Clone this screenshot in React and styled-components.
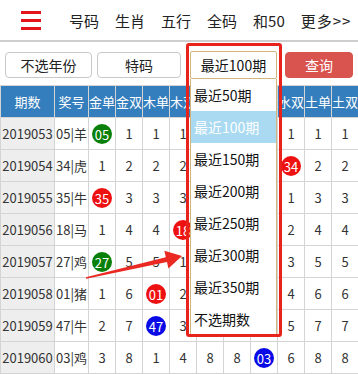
import React from 'react'
import styled, { createGlobalStyle } from 'styled-components'

const Global = createGlobalStyle`
  body {
    margin: 0;
    background: #fff;
    font-family: "Noto Sans CJK SC", "Noto Sans", sans-serif;
  }
`

const Page = styled.div`
  position: relative;
  width: 358px;
  height: 374px;
  overflow: hidden;
`

const Nav = styled.div`
  height: 40px;
  display: flex;
  align-items: center;
  border-bottom: 2px solid #cfcfcf;
`

const Burger = styled.div`
  width: 20px;
  margin: 0 28px 0 21px;
  display: flex;
  flex-direction: column;
  gap: 5px;
  span {
    display: block;
    height: 3px;
    background: #e3151a;
  }
`

const NavItems = styled.div`
  display: flex;
  gap: 16px;
  font-size: 15px;
  color: #222;
  white-space: nowrap;
`

const More = styled.span`
  letter-spacing: 1px;
`

const Filter = styled.div`
  display: flex;
  align-items: center;
  padding: 9px 0 0 5px;
  height: 28px;
`

const Btn = styled.div`
  width: ${p => p.$w}px;
  margin-left: ${p => p.$ml || 0}px;
  height: 26px;
  box-sizing: border-box;
  border: 1px solid #c8c8c8;
  border-radius: 4px;
  display: flex;
  align-items: center;
  justify-content: center;
  font-size: 14px;
  color: #222;
`

const Query = styled(Btn)`
  border-color: #d9534f;
  background: #d9534f;
  color: #fff;
`

const SelectWrap = styled.div`
  position: relative;
  width: 87px;
  margin-left: 9px;
`

const Select = styled.div`
  height: 28px;
  box-sizing: border-box;
  border: 1px solid #d2b57c;
  border-radius: 2px;
  display: flex;
  align-items: center;
  justify-content: center;
  font-size: 14px;
  color: #111;
  background: #fff;
`

const List = styled.div`
  position: absolute;
  top: 100%;
  left: 0;
  right: 0;
  background: #fff;
  border: 1px solid #d2b57c;
  border-top: none;
  z-index: 5;
`

const Option = styled.div`
  height: 32px;
  line-height: 32px;
  padding-left: 3px;
  font-size: 14px;
  color: ${p => (p.$on ? '#fff' : '#111')};
  background: ${p => (p.$on ? '#a9daf1' : '#fff')};
  white-space: nowrap;
`

const Mark = styled.div`
  position: absolute;
  left: -4px;
  top: -8px;
  width: 96px;
  height: 294px;
  box-sizing: border-box;
  border: 3px solid #e8231c;
  border-radius: 3px;
  z-index: 6;
  pointer-events: none;
`

const Table = styled.table`
  margin-top: 6px;
  width: 358px;
  table-layout: fixed;
  border-collapse: collapse;
  font-size: 13px;
  color: #333;
`

const Th = styled.th`
  height: 31px;
  padding: 0;
  background: #357ebd;
  color: #fff;
  font-weight: normal;
  border: 1px solid #d4d4d4;
  white-space: nowrap;
  overflow: hidden;
`

const Td = styled.td`
  height: 31px;
  padding: 0;
  text-align: center;
  border: 1px solid #d4d4d4;
  background: ${p => (p.$gray ? '#eeeeee' : '#fff')};
  white-space: nowrap;
  overflow: hidden;
`

const Ball = styled.span`
  display: inline-flex;
  align-items: center;
  justify-content: center;
  width: 20px;
  height: 20px;
  border-radius: 50%;
  color: #fff;
  font-size: 13px;
  background: ${p => p.$c};
  vertical-align: middle;
`

const Arrow = styled.svg`
  position: absolute;
  left: 0;
  top: 0;
  z-index: 7;
  pointer-events: none;
`

const RED = '#ee1111'
const GREEN = '#0a800a'
const BLUE = '#0a0ae6'

// empty labels sit under the open dropdown
const heads = ['期数', '奖号', '金单', '金双', '木单', '木双', '', '', '', '水双', '土单', '土双']

// null = cell hidden under the open dropdown
const rows = [
  ['2019053', '05|羊', [['05', GREEN], 1, 1, 1, null, null, null, 1, 1, 1]],
  ['2019054', '34|虎', [1, 2, 2, 2, null, null, null, ['34', RED], 2, 2]],
  ['2019055', '35|牛', [['35', RED], 3, 3, 3, null, null, null, 1, 3, 3]],
  ['2019056', '18|马', [1, 4, 4, ['18', RED], null, null, null, 2, 4, 4]],
  ['2019057', '27|鸡', [['27', GREEN], 5, 5, 1, null, null, null, 3, 5, 5]],
  ['2019058', '01|猪', [1, 6, ['01', RED], 2, null, null, null, 4, 6, 6]],
  ['2019059', '47|牛', [2, 7, ['47', BLUE], 3, null, null, null, 5, 7, 7]],
  ['2019060', '03|鸡', [3, 8, 1, 4, 8, 8, ['03', BLUE], 6, 8, 8]],
]

const options = ['最近50期', '最近100期', '最近150期', '最近200期', '最近250期', '最近300期', '最近350期', '不选期数']

const App = () => {
  return (
    <Page>
      <Global />
      <Nav>
        <Burger><span /><span /><span /></Burger>
        <NavItems>
          <span>号码</span>
          <span>生肖</span>
          <span>五行</span>
          <span>全码</span>
          <span>和50</span>
          <More>更多&gt;&gt;</More>
        </NavItems>
      </Nav>

      <Filter>
        <Btn $w={87}>不选年份</Btn>
        <Btn $w={84} $ml={5}>特码</Btn>
        <SelectWrap>
          <Select>最近100期</Select>
          <List>
            {options.map(o => (
              <Option key={o} $on={o === '最近100期'}>{o}</Option>
            ))}
          </List>
          <Mark />
        </SelectWrap>
        <Query $w={68} $ml={8}>查询</Query>
      </Filter>

      <Table>
        <colgroup>
          <col style={{ width: 54 }} />
          <col style={{ width: 34 }} />
          {heads.slice(2).map((h, i) => <col key={i} style={{ width: 27 }} />)}
        </colgroup>
        <thead>
          <tr>{heads.map((h, i) => <Th key={i}>{h}</Th>)}</tr>
        </thead>
        <tbody>
          {rows.map(([q, n, cells]) => (
            <tr key={q}>
              <Td $gray>{q}</Td>
              <Td>{n}</Td>
              {cells.map((c, i) => (
                <Td key={i}>
                  {Array.isArray(c) ? <Ball $c={c[1]}>{c[0]}</Ball> : c}
                </Td>
              ))}
            </tr>
          ))}
        </tbody>
      </Table>

      <Arrow width="358" height="374" viewBox="0 0 358 374">
        <polygon
          fill="#ea2a22"
          points="85.8,277.2 165.8,257.2 164.4,250.8 182,256 168.4,268.4 167,262 86.2,278.8"
        />
      </Arrow>
    </Page>
  )
}

export default App
